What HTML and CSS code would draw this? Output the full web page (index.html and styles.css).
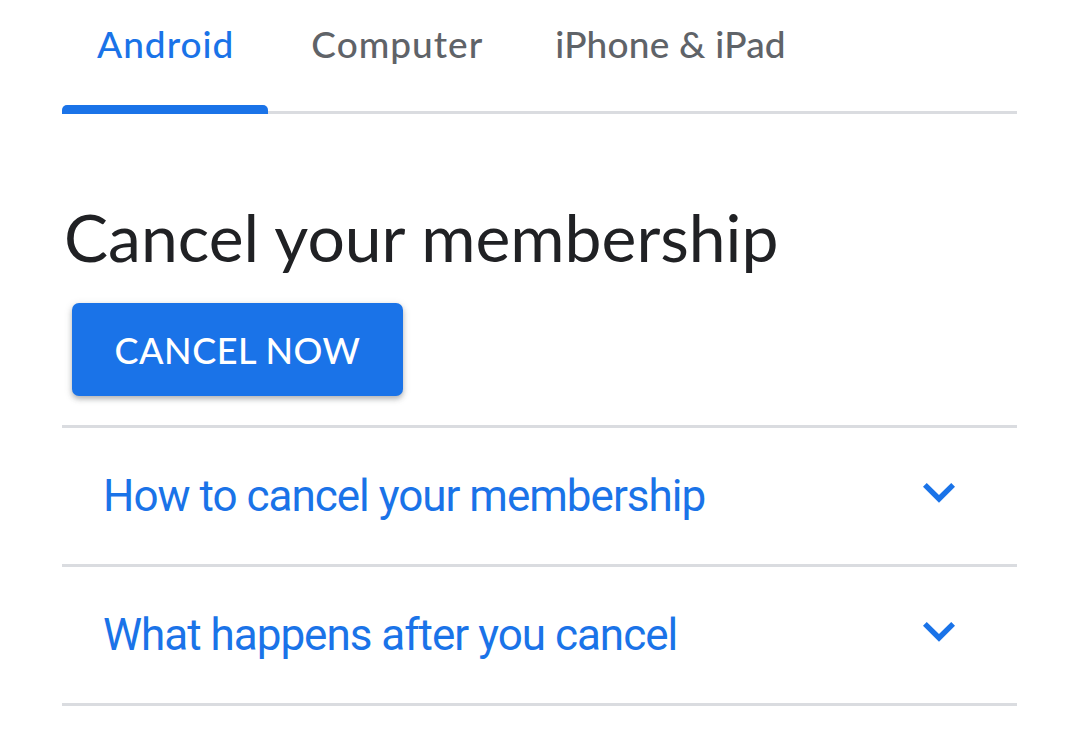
FILE: index.html
```html
<!DOCTYPE html>
<html lang="en">
<head>
<meta charset="utf-8">
<title>Cancel your membership</title>
<link rel="stylesheet" href="styles.css">
</head>
<body>
<div class="page">
  <nav class="tabs">
    <div class="tab tab-active">Android</div>
    <div class="tab">Computer</div>
    <div class="tab tab-narrow">iPhone &amp; iPad</div>
  </nav>
  <h1 class="title">Cancel your membership</h1>
  <div class="actions">
    <button class="btn-primary">CANCEL NOW</button>
  </div>
  <div class="accordion">
    <div class="acc-row">
      <span class="acc-label">How to cancel your membership</span>
      <svg class="acc-icon" viewBox="0 0 24 24" width="64" height="64"><path d="M16.59 8.59L12 13.17 7.41 8.59 6 10l6 6 6-6z" fill="#1a73e8"/></svg>
    </div>
    <div class="acc-row">
      <span class="acc-label">What happens after you cancel</span>
      <svg class="acc-icon" viewBox="0 0 24 24" width="64" height="64"><path d="M16.59 8.59L12 13.17 7.41 8.59 6 10l6 6 6-6z" fill="#1a73e8"/></svg>
    </div>
  </div>
</div>
</body>
</html>
```
FILE: styles.css
```css
html, body {
  margin: 0;
  padding: 0;
  background: #ffffff;
}

.page {
  padding: 0 62px;
}

.tabs {
  display: flex;
  gap: 8px;
  border-bottom: 3px solid #dadce0;
  font-family: "Lato", "Open Sans", sans-serif;
  font-weight: 500;
  font-size: 37px;
  line-height: 36px;
  letter-spacing: 1px;
}

.tab {
  position: relative;
  height: 111px;
  box-sizing: border-box;
  padding: 26px 34px 0 35px;
  color: #5f6368;
  white-space: nowrap;
}

.tab-narrow {
  padding-left: 30px;
  letter-spacing: 0.2px;
}

.tab-active {
  color: #1a73e8;
}

.tab-active::after {
  content: "";
  position: absolute;
  left: 0;
  right: 0;
  bottom: -3px;
  height: 9px;
  background: #1a73e8;
  border-radius: 5px 5px 0 0;
}

.title {
  margin: 0;
  padding-top: 87px;
  padding-left: 2px;
  font-family: "Lato", "Open Sans", sans-serif;
  font-weight: 400;
  font-size: 66px;
  line-height: 72px;
  color: #202124;
}

.actions {
  padding: 30px 0 29px 10px;
}

.btn-primary {
  display: block;
  width: 331px;
  height: 93px;
  border: 0;
  border-radius: 7px;
  background: #1a73e8;
  color: #ffffff;
  font-family: "Lato", "Open Sans", sans-serif;
  font-weight: 500;
  font-size: 36px;
  letter-spacing: 0.5px;
  box-shadow: 0 3px 5px rgba(60, 64, 67, 0.3), 0 2px 8px rgba(60, 64, 67, 0.15);
  cursor: pointer;
}

.accordion {
  border-bottom: 3px solid #dadce0;
}

.acc-row {
  display: flex;
  align-items: center;
  justify-content: space-between;
  height: 139px;
  box-sizing: border-box;
  border-top: 3px solid #dadce0;
  padding: 0 46px 0 41px;
}

.acc-label {
  font-family: "Roboto", sans-serif;
  font-size: 44px;
  letter-spacing: -1px;
  color: #1a73e8;
}

.acc-icon {
  display: block;
  margin-bottom: 8px;
}
```
